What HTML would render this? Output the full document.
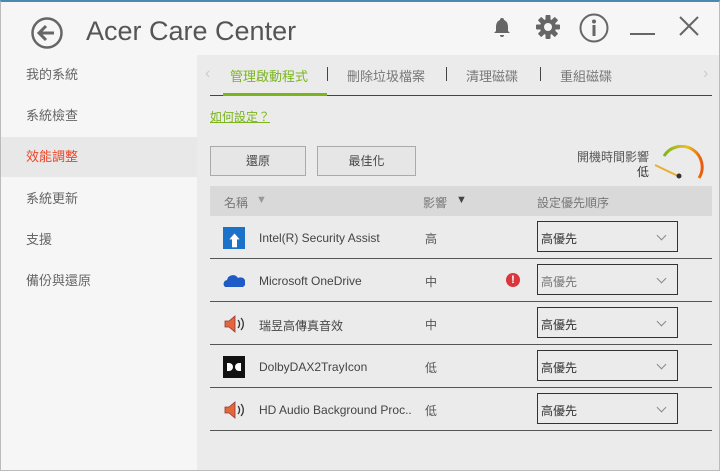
<!DOCTYPE html><html><head><meta charset="utf-8"><style>
*{margin:0;padding:0;box-sizing:border-box}
body{width:720px;height:471px;overflow:hidden;font-family:"Liberation Sans","Noto Sans CJK TC",sans-serif;background:#f6f6f6;position:relative;color:#333}
.a{position:absolute}
.side div{position:absolute;left:0;width:197px;height:40px;line-height:40px;padding-left:26px;font-size:13px;color:#666}
.tab{position:absolute;top:66px;font-size:13px;color:#777}
.sep{position:absolute;top:67px;width:1px;height:14px;background:#444}
.btn{position:absolute;top:146px;height:30px;border:1px solid #aaa;background:#e6e6e6;font-size:12px;text-align:center;line-height:28px;color:#444}
.row{position:absolute;left:210px;width:502px;height:43px;border-bottom:1px solid #555;font-size:12px}
.row .n{position:absolute;left:49px;top:15px;color:#444}
.row .i{position:absolute;left:215px;top:14px;color:#555}
.row .d{position:absolute;left:327px;top:5px;width:141px;height:31px;border:1.5px solid #333;font-size:12px;padding:8px 0 0 3px}
.row .d::after{content:"";position:absolute;right:12px;top:10px;width:6px;height:6px;border-right:1px solid #888;border-bottom:1px solid #888;transform:rotate(45deg)}
.ic{position:absolute;left:13px;top:11px;width:22px;height:22px}
</style></head><body>
<div class="a" style="left:0;top:0;width:720px;height:471px;border:1px solid #bbb;border-top:2px solid #4a8ab0;pointer-events:none;z-index:5"></div>
<svg class="a" style="left:30px;top:16px" width="34" height="34"><circle cx="17" cy="17" r="14.5" fill="none" stroke="#666" stroke-width="2.5"/><path d="M24 17H10M16 10l-7 7 7 7" fill="none" stroke="#666" stroke-width="3"/></svg>
<div class="a" style="left:86px;top:16px;font-size:27px;color:#555">Acer Care Center</div>
<svg class="a" style="left:490px;top:15px" width="24" height="24"><path d="M12 3a2 2 0 012 2c3 1 4 4 4 7v4l2 2H4l2-2v-4c0-3 1-6 4-7a2 2 0 012-2zM10 20h4a2 2 0 01-4 0z" fill="#666"/></svg>
<svg class="a" style="left:535px;top:14px" width="26" height="26"><g fill="#666"><circle cx="13" cy="13" r="8"/><rect x="10.5" y="1" width="5" height="24" rx="1"/><rect x="10.5" y="1" width="5" height="24" rx="1" transform="rotate(45 13 13)"/><rect x="10.5" y="1" width="5" height="24" rx="1" transform="rotate(90 13 13)"/><rect x="10.5" y="1" width="5" height="24" rx="1" transform="rotate(135 13 13)"/></g><circle cx="13" cy="13" r="4" fill="#f6f6f6"/></svg>
<svg class="a" style="left:578px;top:12px" width="32" height="32"><circle cx="16" cy="16" r="13.5" fill="none" stroke="#666" stroke-width="2"/><circle cx="16" cy="9.5" r="2" fill="#666"/><rect x="14.5" y="13" width="3" height="11" fill="#666"/></svg>
<div class="a" style="left:630px;top:33px;width:25px;height:2px;background:#666"></div>
<svg class="a" style="left:678px;top:15px" width="22" height="22"><path d="M2 2L20 20M20 2L2 20" stroke="#666" stroke-width="2"/></svg>
<div class="a" style="left:197px;top:55px;width:523px;height:416px;background:#ebebeb"></div>
<div class="side">
<div style="top:55px">我的系統</div><div style="top:96px">系統檢查</div>
<div style="top:137px;background:#e8e8e8;color:#e8462a">效能調整</div>
<div style="top:179px">系統更新</div><div style="top:220px">支援</div><div style="top:261px">備份與還原</div></div>
<div class="a" style="left:205px;top:65px;color:#ccc;font-size:16px">‹</div>
<div class="a" style="left:703px;top:65px;color:#ccc;font-size:16px">›</div>
<div class="tab" style="left:230px;color:#7ab51d">管理啟動程式</div>
<div class="sep" style="left:327px"></div>
<div class="tab" style="left:347px">刪除垃圾檔案</div>
<div class="sep" style="left:446px"></div>
<div class="tab" style="left:466px">清理磁碟</div>
<div class="sep" style="left:540px"></div>
<div class="tab" style="left:560px">重組磁碟</div>
<div class="a" style="left:210px;top:95px;width:502px;height:1px;background:#444"></div>
<div class="a" style="left:223px;top:93px;width:104px;height:3px;background:#7ab51d"></div>
<div class="a" style="left:210px;top:108px;font-size:12px;color:#7ab51d;text-decoration:underline">如何設定？</div>
<div class="btn" style="left:210px;width:96px">還原</div>
<div class="btn" style="left:317px;width:99px">最佳化</div>
<div class="a" style="left:577px;top:148px;font-size:12px;color:#555">開機時間影響</div>
<div class="a" style="left:637px;top:163px;font-size:12px;color:#333">低</div>
<svg class="a" style="left:652px;top:145px" width="52" height="36"><defs><linearGradient id="g" x1="0" x2="1"><stop offset="0" stop-color="#7ab51d"/><stop offset=".6" stop-color="#e8c020"/><stop offset="1" stop-color="#e85a10"/></linearGradient></defs><path d="M12 11A20 20 0 0147 33" fill="none" stroke="url(#g)" stroke-width="3"/><path d="M3 20L26 31" stroke="#e8b030" stroke-width="2"/><circle cx="27" cy="31" r="2.5" fill="#333"/></svg>
<div class="a" style="left:210px;top:186px;width:502px;height:30px;background:#d9d9d9;font-size:12px;color:#777">
<span class="a" style="left:14px;top:8px">名稱</span><span class="a" style="left:46px;top:8px;color:#999;font-size:11px">▼</span>
<span class="a" style="left:213px;top:8px">影響</span><span class="a" style="left:246px;top:8px;color:#444;font-size:11px">▼</span>
<span class="a" style="left:327px;top:8px">設定優先順序</span></div>
<div class="row" style="top:216px"><div class="ic" style="background:#1a73c8"><div class="a" style="left:4px;top:3px;color:#fff;font-size:15px;font-weight:bold">⬆</div></div><div class="n">Intel(R) Security Assist</div><div class="i">高</div><div class="d">高優先</div></div>
<div class="row" style="top:259px"><svg class="ic" viewBox="0 0 22 22"><path d="M2 17a4 4 0 012-7 6 6 0 0111-2 5 5 0 015 9z" fill="#1e5bc6"/></svg><div class="n">Microsoft OneDrive</div><div class="i">中</div><div class="a" style="left:296px;top:14px;width:14px;height:14px;border-radius:50%;background:#d9363e;color:#fff;font-size:11px;font-weight:bold;text-align:center;line-height:14px">!</div><div class="d" style="color:#777">高優先</div></div>
<div class="row" style="top:302px"><svg class="ic" viewBox="0 0 22 22"><path d="M2 8h4l6-5v16l-6-5H2z" fill="#e0683a" stroke="#933" stroke-width=".8"/><path d="M15 7a6 6 0 010 8M18 5a9 9 0 010 12" fill="none" stroke="#333" stroke-width="1.3"/></svg><div class="n">瑞昱高傳真音效</div><div class="i">中</div><div class="d">高優先</div></div>
<div class="row" style="top:345px"><div class="ic" style="background:#111"><div class="a" style="left:4px;top:7px;width:6px;height:8px;background:#fff;border-radius:0 4px 4px 0"></div><div class="a" style="left:12px;top:7px;width:6px;height:8px;background:#fff;border-radius:4px 0 0 4px"></div></div><div class="n">DolbyDAX2TrayIcon</div><div class="i">低</div><div class="d">高優先</div></div>
<div class="row" style="top:388px"><svg class="ic" viewBox="0 0 22 22"><path d="M2 8h4l6-5v16l-6-5H2z" fill="#e0683a" stroke="#933" stroke-width=".8"/><path d="M15 7a6 6 0 010 8M18 5a9 9 0 010 12" fill="none" stroke="#333" stroke-width="1.3"/></svg><div class="n">HD Audio Background Proc..</div><div class="i">低</div><div class="d">高優先</div></div>
</body></html>
